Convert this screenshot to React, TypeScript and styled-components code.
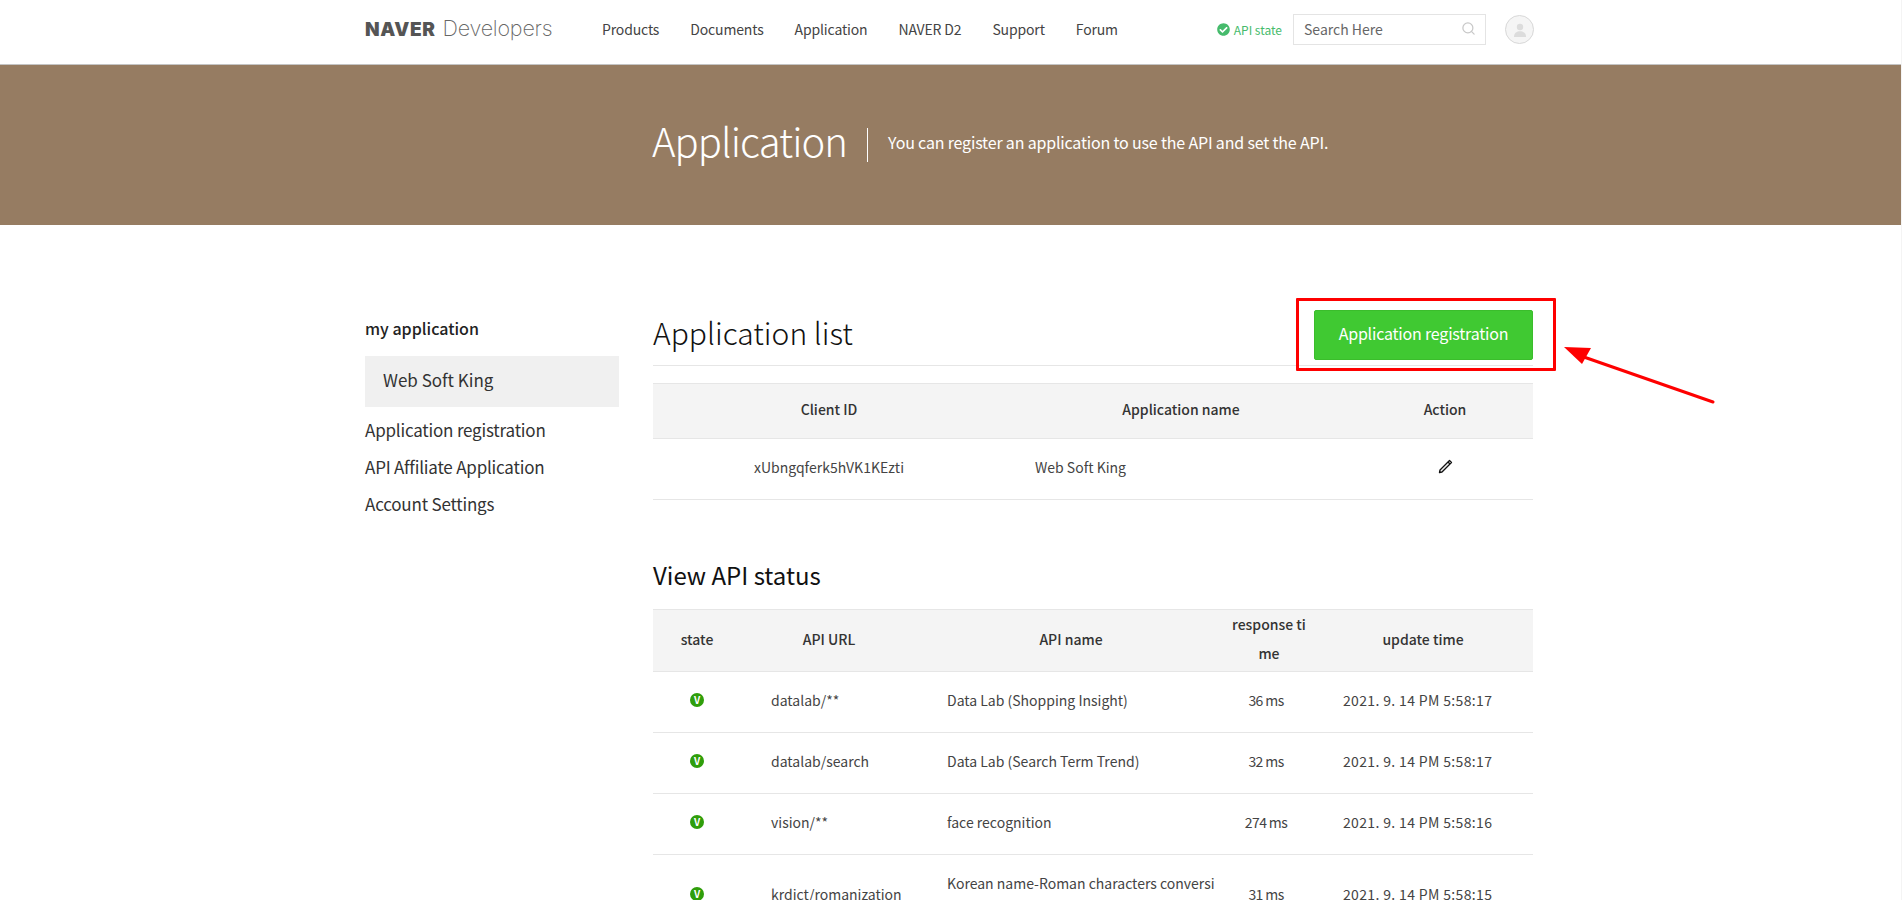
import React from "react"
import styled, { createGlobalStyle } from "styled-components"
import { FaCheckCircle } from "react-icons/fa"
import { FiSearch } from "react-icons/fi"

interface IApi {
  url: string
  name: string
  time: string
  updated: string
}

const apis: IApi[] = [
  { url: "datalab/**", name: "Data Lab (Shopping Insight)", time: "36 ms", updated: "2021. 9. 14 PM 5:58:17" },
  { url: "datalab/search", name: "Data Lab (Search Term Trend)", time: "32 ms", updated: "2021. 9. 14 PM 5:58:17" },
  { url: "vision/**", name: "face recognition", time: "274 ms", updated: "2021. 9. 14 PM 5:58:16" },
  { url: "krdict/romanization", name: "Korean name-Roman characters conversion", time: "31 ms", updated: "2021. 9. 14 PM 5:58:15" }
]

const navItems = ["Products", "Documents", "Application", "NAVER D2", "Support", "Forum"]
const sideLinks = ["Application registration", "API Affiliate Application", "Account Settings"]

const GlobalStyle = createGlobalStyle`
  html, body {
    margin: 0;
    height: 900px;
    overflow: hidden;
    background: #f4f4f4;
  }
  body {
    font-family: "Noto Sans CJK KR", "Noto Sans", sans-serif;
    color: #333;
  }
`

const Page = styled.div`
  position: relative;
  width: 1901px;
  height: 900px;
  overflow: hidden;
  background: #fff;
`

const Header = styled.header`
  height: 64px;
  border-bottom: 1px solid #c4c4c4;
`

const Container = styled.div`
  width: 1171px;
  margin: 0 auto;
`

const HeaderRow = styled(Container)`
  height: 59px;
  display: flex;
  align-items: center;
`

const Logo = styled.div`
  width: 187px;
  display: flex;
  align-items: baseline;
  gap: 7px;
  margin-bottom: 4px;
  font-family: Inter, sans-serif;
`

const LogoBold = styled.span`
  font-size: 19px;
  font-weight: 900;
  letter-spacing: 0.6px;
  color: #555;
`

const LogoThin = styled.span`
  font-size: 21.5px;
  font-weight: 200;
  letter-spacing: -0.2px;
  color: #666;
`

const Nav = styled.nav`
  margin-left: 50px;
  margin-bottom: 2px;
  display: flex;
  gap: 31px;
`

const NavItem = styled.a`
  font-size: 14px;
  letter-spacing: -0.15px;
  color: #444;
`

const HeaderRight = styled.div`
  margin-left: auto;
  margin-right: 2px;
  display: flex;
  align-items: center;
`

const ApiState = styled.div`
  display: flex;
  align-items: center;
  gap: 4px;
  color: #46bb6c;
  font-size: 12px;
  margin-right: 11px;
`

const SearchBox = styled.div`
  box-sizing: border-box;
  width: 193px;
  height: 31px;
  border: 1px solid #e4e4e4;
  display: flex;
  align-items: center;
  justify-content: space-between;
  padding: 0 9px 2px 10px;
  font-size: 14px;
  color: #666;
  svg {
    color: #c8c8c8;
  }
`

const Avatar = styled.div`
  box-sizing: border-box;
  margin-left: 19px;
  width: 29px;
  height: 29px;
  border-radius: 50%;
  border: 1px solid #d8d8d8;
  background: #f5f5f5;
  display: grid;
  place-content: center;
`

const Banner = styled.section`
  height: 160px;
  background: #967c62;
  color: #fff;
  display: flex;
  align-items: center;
  padding-left: 652px;
  box-sizing: border-box;
`

const BannerTitle = styled.h1`
  margin: 0;
  height: 34px;
  font-size: 40px;
  font-weight: 300;
  letter-spacing: -0.95px;
  padding-right: 20px;
  border-right: 1px solid #fff;
  line-height: 24px;
`

const BannerText = styled.p`
  margin: 0 0 6px 20px;
  font-size: 16px;
  letter-spacing: -0.18px;
  font-weight: 400;
`

const Layout = styled(Container)`
  display: grid;
  grid-template-columns: 254px 880px;
  gap: 34px;
`

const Sidebar = styled.aside`
  padding-top: 91px;
`

const SideTitle = styled.h4`
  margin: 0 0 16px;
  font-size: 16px;
  line-height: 24px;
  font-weight: 500;
  color: #222;
`

const SideActive = styled.div`
  height: 51px;
  padding-left: 18px;
  background: #f0f0f0;
  font-size: 17px;
  line-height: 47px;
  color: #333;
`

const SideLinks = styled.div`
  margin-top: 4px;
`

const SideLink = styled.a`
  display: block;
  font-size: 17px;
  letter-spacing: -0.2px;
  line-height: 37px;
  color: #333;
`

const Main = styled.main`
  padding-top: 85px;
`

const TitleRow = styled.div`
  display: flex;
  align-items: center;
  justify-content: space-between;
  padding-bottom: 5px;
  border-bottom: 1px solid #e6e6e6;
  margin-bottom: 17px;
`

const ListTitle = styled.h2`
  margin: -6px 0 0;
  font-size: 30px;
  font-weight: 300;
  color: #111;
`

const RegisterButton = styled.button`
  box-sizing: border-box;
  width: 219px;
  height: 50px;
  padding: 0 0 4px;
  border: 1px solid #3bbd2c;
  border-radius: 2px;
  background: #40c932;
  color: #fff;
  font-family: inherit;
  font-size: 16px;
  letter-spacing: -0.2px;
`

const Table = styled.table`
  width: 100%;
  border-collapse: collapse;
  table-layout: fixed;
`

const Th = styled.th<{ $width: string }>`
  width: ${({ $width }) => $width};
  height: 55px;
  padding: 0 5px 3px;
  box-sizing: border-box;
  background: #f4f4f4;
  border-top: 1px solid #e6e6e6;
  border-bottom: 1px solid #e6e6e6;
  font-size: 14px;
  font-weight: 500;
  line-height: 29px;
  color: #333;
  word-break: break-all;
`

const Td = styled.td`
  padding: 17px 0 21px;
  border-bottom: 1px solid #e6e6e6;
  font-size: 14px;
  line-height: 22px;
  color: #444;
  text-align: center;
  word-break: break-all;
`

const LeftCell = styled(Td)`
  padding-left: 30px;
  padding-right: 10px;
  text-align: left;
`

const TimeCell = styled(Td)`
  padding-right: 6px;
  letter-spacing: -0.6px;
`

const DateCell = styled(LeftCell)`
  letter-spacing: 0.35px;
`

const StatusTitle = styled.h3`
  margin: 57px 0 16px;
  font-size: 24px;
  line-height: 36px;
  font-weight: 400;
  color: #111;
`

const StateDot = styled.span`
  display: inline-block;
  width: 14px;
  height: 14px;
  border-radius: 50%;
  background: #2f9e0b;
  color: #fff;
  font-size: 10px;
  font-weight: 700;
  line-height: 14px;
  position: relative;
  top: -2px;
`

const Annotation = styled.div`
  position: absolute;
  box-sizing: border-box;
  left: 1296px;
  top: 298px;
  width: 260px;
  height: 73px;
  border: 3px solid #fe0000;
  border-radius: 1px;
`

const Arrow = styled.svg`
  position: absolute;
  left: 1555px;
  top: 340px;
`

const PencilIcon = () => (
  <svg width="15" height="15" viewBox="0 0 15 15" style={{ verticalAlign: "-1px" }}>
    <path d="M11.5 1.5 L13.5 3.5 L4 13 L1.5 13.5 L2 11 Z" fill="#eee" stroke="#111" strokeWidth="1.3" strokeLinejoin="round" />
    <path d="M10 3 L12 5" stroke="#111" strokeWidth="1.3" />
  </svg>
)

const UserIcon = () => (
  <svg width="16" height="16" viewBox="0 0 16 16">
    <circle cx="8" cy="5" r="3.2" fill="#dcdcdc" />
    <path d="M2 15 C2 10.5 5 9.2 8 9.2 C11 9.2 14 10.5 14 15 Z" fill="#dcdcdc" />
  </svg>
)

const App: React.FC = () => (
  <Page>
    <GlobalStyle />
    <Header>
      <HeaderRow>
        <Logo>
          <LogoBold>NAVER</LogoBold>
          <LogoThin>Developers</LogoThin>
        </Logo>
        <Nav>
          {navItems.map((item) => (
            <NavItem key={item}>{item}</NavItem>
          ))}
        </Nav>
        <HeaderRight>
          <ApiState>
            <FaCheckCircle size={13} />
            API state
          </ApiState>
          <SearchBox>
            Search Here
            <FiSearch size={15} />
          </SearchBox>
          <Avatar>
            <UserIcon />
          </Avatar>
        </HeaderRight>
      </HeaderRow>
    </Header>
    <Banner>
      <BannerTitle>Application</BannerTitle>
      <BannerText>You can register an application to use the API and set the API.</BannerText>
    </Banner>
    <Layout>
      <Sidebar>
        <SideTitle>my application</SideTitle>
        <SideActive>Web Soft King</SideActive>
        <SideLinks>
          {sideLinks.map((link) => (
            <SideLink key={link}>{link}</SideLink>
          ))}
        </SideLinks>
      </Sidebar>
      <Main>
        <TitleRow>
          <ListTitle>Application list</ListTitle>
          <RegisterButton>Application registration</RegisterButton>
        </TitleRow>
        <Table>
          <thead>
            <tr>
              <Th $width="40%">Client ID</Th>
              <Th $width="40%">Application name</Th>
              <Th $width="20%">Action</Th>
            </tr>
          </thead>
          <tbody>
            <tr>
              <Td>xUbngqferk5hVK1KEzti</Td>
              <LeftCell>Web Soft King</LeftCell>
              <Td>
                <PencilIcon />
              </Td>
            </tr>
          </tbody>
        </Table>
        <StatusTitle>View API status</StatusTitle>
        <Table>
          <thead>
            <tr>
              <Th $width="10%">state</Th>
              <Th $width="20%">API URL</Th>
              <Th $width="35%">API name</Th>
              <Th $width="10%">response time</Th>
              <Th $width="25%">update time</Th>
            </tr>
          </thead>
          <tbody>
            {apis.map((api) => (
              <tr key={api.url}>
                <Td>
                  <StateDot>V</StateDot>
                </Td>
                <LeftCell>{api.url}</LeftCell>
                <LeftCell>{api.name}</LeftCell>
                <TimeCell>{api.time}</TimeCell>
                <DateCell>{api.updated}</DateCell>
              </tr>
            ))}
          </tbody>
        </Table>
      </Main>
    </Layout>
    <Annotation />
    <Arrow width="165" height="70" viewBox="0 0 165 70">
      <path d="M158 62 L26 16" stroke="#fe0000" strokeWidth="3" strokeLinecap="round" />
      <path d="M9 7 L36 8 L27 24 Z" fill="#fe0000" />
    </Arrow>
  </Page>
)

export default App
